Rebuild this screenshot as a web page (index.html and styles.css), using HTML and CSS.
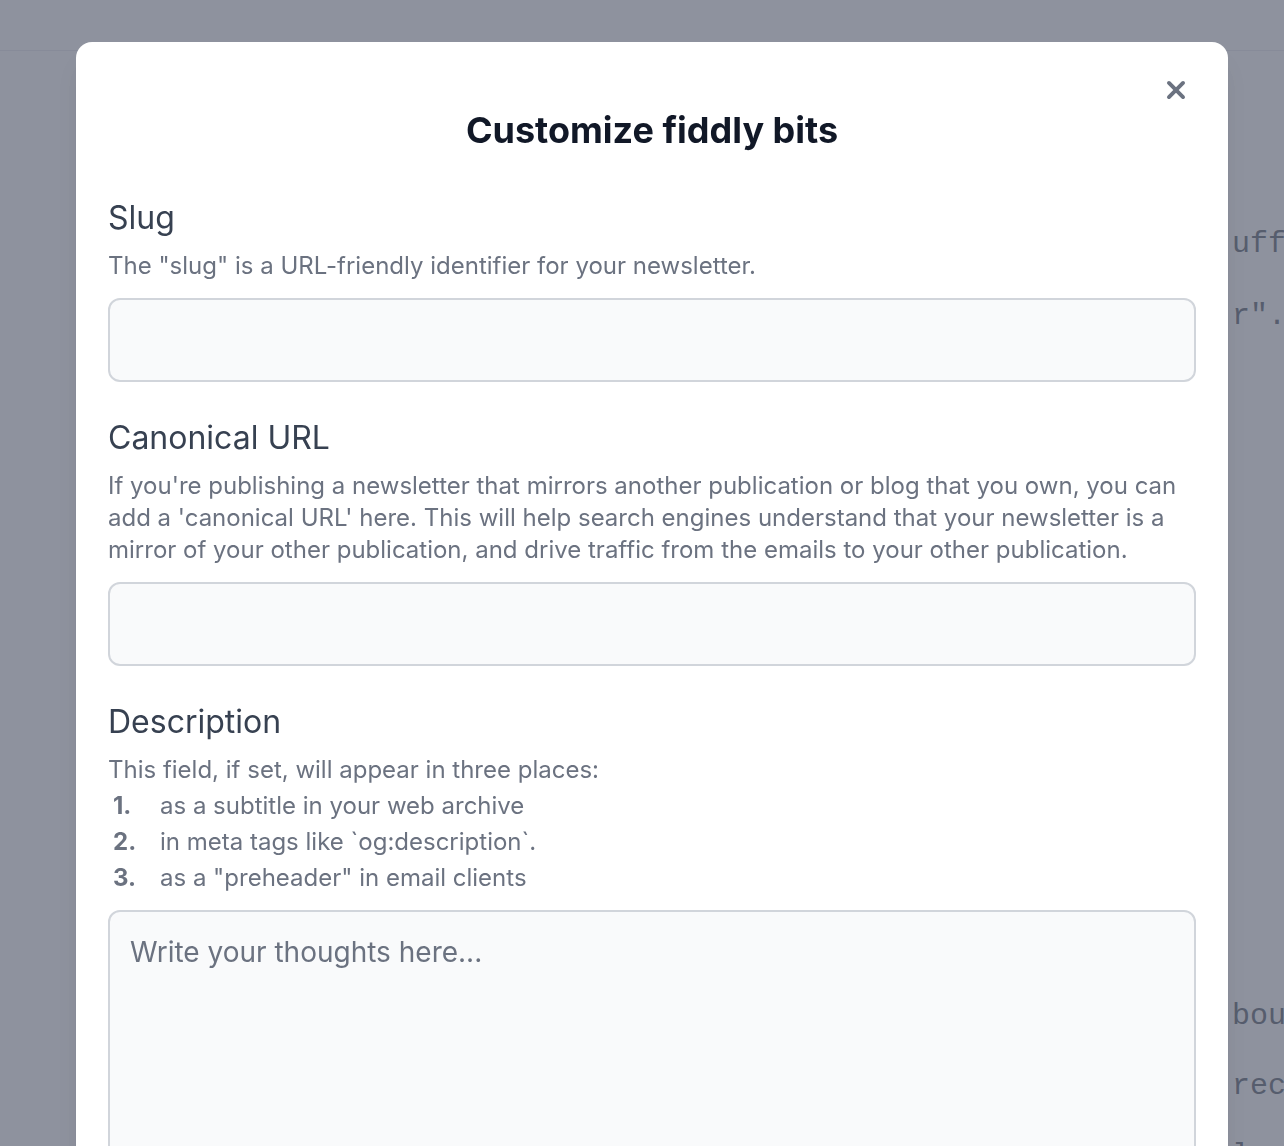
FILE: index.html
```html
<!DOCTYPE html>
<html lang="en">
<head>
<meta charset="utf-8">
<title>Customize fiddly bits</title>
<link rel="stylesheet" href="styles.css">
</head>
<body>
<div class="page">
  <header class="page-header"></header>
  <main class="page-main">
<pre class="code code-top">some of the  uff
the letters  r".</pre>
<pre class="code code-bottom">and more is  bout
we have been received
all of it is lovely</pre>
  </main>
</div>

<div class="overlay">
  <div class="modal">
    <button class="close" aria-label="Close">
      <svg viewBox="0 0 24 24" width="26" height="26" fill="none" stroke="currentColor" stroke-width="3.6" stroke-linecap="round" stroke-linejoin="round"><path d="M5.5 5.5l13 13M18.5 5.5l-13 13"/></svg>
    </button>
    <h2 class="title">Customize fiddly bits</h2>

    <section class="field">
      <label class="label">Slug</label>
      <p class="help">The "slug" is a URL-friendly identifier for your newsletter.</p>
      <input class="input" type="text">
    </section>

    <section class="field">
      <label class="label">Canonical URL</label>
      <p class="help">If you're publishing a newsletter that mirrors another publication or blog that you own, you can add a 'canonical URL' here. This will help search engines understand that your newsletter is a mirror of your other publication, and drive traffic from the emails to your other publication.</p>
      <input class="input" type="text">
    </section>

    <section class="field">
      <label class="label">Description</label>
      <div class="help">
        <p>This field, if set, will appear in three places:</p>
        <ol class="list">
          <li>as a subtitle in your web archive</li>
          <li>in meta tags like `og:description`.</li>
          <li>as a "preheader" in email clients</li>
        </ol>
      </div>
      <textarea class="textarea" placeholder="Write your thoughts here..."></textarea>
    </section>
  </div>
</div>
</body>
</html>
```

FILE: styles.css
```css
* { box-sizing: border-box; }
html, body { margin: 0; padding: 0; }
body {
  font-family: Inter, "Noto Sans", sans-serif;
  background: #ffffff;
  overflow: hidden;
  height: 1146px;
}
.page-header {
  height: 51px;
  border-bottom: 1px solid #e5e7eb;
}
.page-main {
  padding-top: 157px;
}
.code {
  margin: 0 0 0 998px;
  font-family: "Liberation Mono", monospace;
  font-size: 30px;
  line-height: 72px;
  color: #374151;
  white-space: pre;
}
.code-bottom {
  margin-top: 629px;
  line-height: 70px;
}
.overlay {
  position: fixed;
  inset: 0;
  background: rgba(99, 104, 120, 0.72);
  padding: 42px 0 0 76px;
}
.modal {
  position: relative;
  width: 1152px;
  height: 1200px;
  background: #ffffff;
  border-radius: 16px;
  padding: 68px 32px 0 32px;
  box-shadow: 0 20px 25px -5px rgba(0,0,0,0.1), 0 10px 10px -5px rgba(0,0,0,0.04);
}
.close {
  position: absolute;
  top: 35px;
  right: 39px;
  padding: 0;
  border: 0;
  background: none;
  color: #6b7280;
  display: flex;
  cursor: pointer;
}
.title {
  margin: 0 0 48px;
  text-align: center;
  font-size: 36px;
  line-height: 40px;
  font-weight: 700;
  color: #111827;
}
.field {
  display: flex;
  flex-direction: column;
  margin-bottom: 36px;
}
.label {
  font-size: 32px;
  line-height: 40px;
  font-weight: 400;
  color: #374151;
  margin-bottom: 12px;
}
.help {
  margin: 0 0 16px;
  font-size: 24px;
  line-height: 32px;
  color: #6b7280;
}
.help p { margin: 0; }
.list {
  margin: 0;
  padding: 0;
  list-style: none;
  counter-reset: item;
}
.list li {
  margin-top: 4px;
  counter-increment: item;
  display: flex;
}
.list li::before {
  content: counter(item) ".";
  flex: 0 0 47px;
  padding-left: 5px;
  font-weight: 700;
  color: #6b7280;
}
.input, .textarea {
  width: 100%;
  border: 2px solid #d1d5db;
  border-radius: 12px;
  background: #f9fafb;
  font-family: inherit;
  font-size: 28px;
  color: #374151;
  outline: none;
}
.input {
  height: 84px;
  padding: 0 20px;
}
.textarea {
  height: 260px;
  padding: 22px 20px;
  line-height: 36px;
  resize: none;
}
.textarea::placeholder {
  color: #6b7280;
  opacity: 1;
}
```
